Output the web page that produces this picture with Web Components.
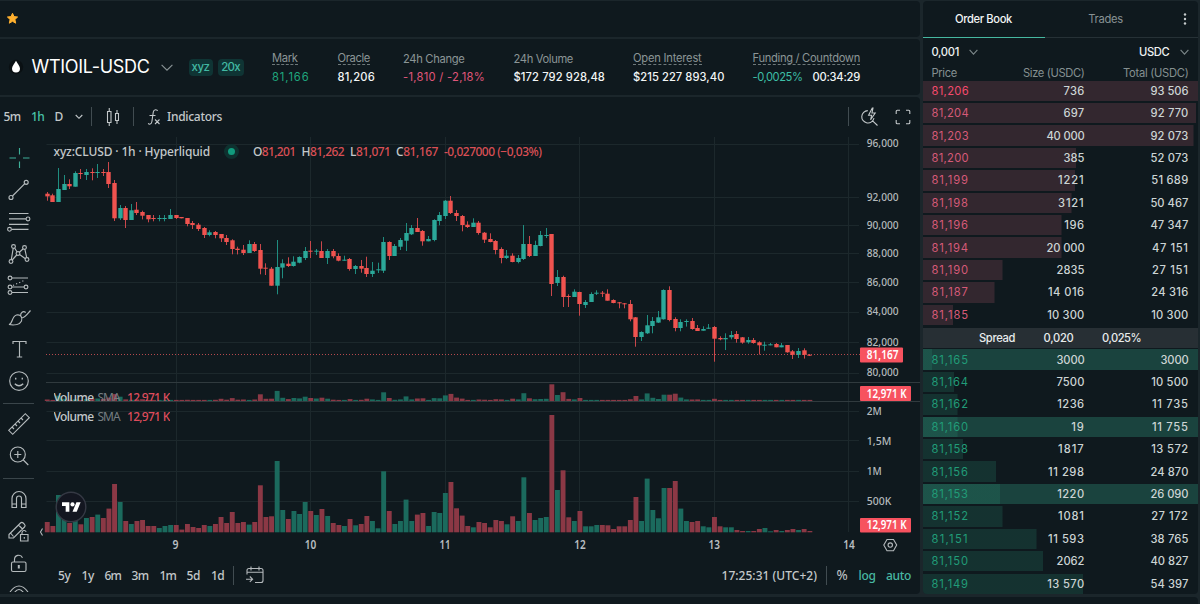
<!DOCTYPE html>
<html lang="en">
<head>
<meta charset="utf-8">
<title>WTIOIL-USDC</title>
<style>
html,body{margin:0;height:100%;overflow:hidden;background:#1b262b}
body{font-family:Inter,"Liberation Sans",sans-serif;font-size:11.2px;color:#d5dbda}
</style>
</head>
<body>
<trade-app></trade-app>
<script>
const define = (name, html, setup) => customElements.define(name, class extends HTMLElement {
  connectedCallback() {
    if (this.shadowRoot) return;
    const t = document.createElement('template');
    t.innerHTML = typeof html === 'function' ? html(this) : html;
    this.attachShadow({mode: 'open'}).appendChild(t.content.cloneNode(true));
    if (setup) setup(this);
  }
});

/* A run of text tracked to occupy exactly `w` pixels. */
define('fit-text', `<style>:host{display:inline-block;white-space:pre;line-height:1.25;flex:none}span{display:inline-block}</style><span><slot></slot></span>`, el => {
  const w = +el.getAttribute('w'), s = el.shadowRoot.querySelector('span');
  const nat = s.getBoundingClientRect().width, n = el.textContent.length;
  el.style.width = w + 'px';
  s.style.letterSpacing = ((w - nat) / Math.max(1, n)).toFixed(3) + 'px';
});

const chevron = (w, h, c) => `<svg class="chev" width="${w}" height="${h}" viewBox="0 0 ${w} ${h}" fill="none" stroke="${c}" stroke-width="1.1"><path d="M.6 .8L${w/2} ${h-.8}L${w-.6} .8"/></svg>`;

define('top-bar', `<style>:host{display:flex;align-items:center;background:#0f191e;border-radius:0 4px 4px 0;padding:0 0 2px 6px;box-sizing:border-box}</style>
<svg width="13" height="13" viewBox="0 0 13 13"><path d="M6.5 1.3L8 4.6l3.6.4-2.7 2.5.8 3.7-3.2-1.9-3.2 1.9.8-3.7L1.4 5 5 4.6z" fill="#ffb02e" stroke="#ffb02e" stroke-linejoin="round"/></svg>`);

define('stat-item', el => `<style>
:host{display:flex;flex-direction:column;align-items:flex-start;flex:none;box-sizing:border-box}
.l{color:#8b9596;height:16px;display:flex;align-items:flex-start;box-sizing:border-box;padding-top:${el.hasAttribute('tip') ? 0 : 1.5}px}
.l.tip{height:14px;border-bottom:1px dashed #6d787a;margin-bottom:2px}
.v{display:flex;gap:10px;font-weight:500;padding-top:2px;margin-top:1px}
</style><div class="l ${el.hasAttribute('tip') ? 'tip' : ''}"><fit-text w="${el.getAttribute('lw')}">${el.getAttribute('label')}</fit-text></div><div class="v"><slot></slot></div>`);

define('market-header', `<style>
:host{display:flex;align-items:center;background:#0f191e;border-radius:0 4px 4px 0;position:relative}
.drop{margin-left:7.500px}
.name{font-size:18px;color:#fff;margin-left:8px;padding-top:1px}
.chev{margin-left:12px;flex:none}
.tag{height:17px;border-radius:4px;background:#0f3434;color:#42b8a2;display:flex;align-items:center;justify-content:center;font-size:11.500px;flex:none;font-weight:500}
.stats{display:grid;grid-template-columns:65.5px 65.5px 110.5px 119.5px 119.5px 110px;margin-left:28.5px;padding-bottom:0}
.g{color:#1fa67d;font-weight:400}.r{color:#e0567a;font-weight:400}.t{color:#3dbfa6;font-weight:400}.w{color:#f2f5f5}
</style>
<svg class="drop" width="16" height="18" viewBox="0 0 16 18"><circle cx="8" cy="9" r="7.2" fill="#0a1013"/><path d="M8 2.8C9.3 5.6 12 8 12 10.6a4 4 0 0 1-8 0C4 8 6.7 5.600 8 2.800z" fill="#fff"/></svg>
<fit-text class="name" w="117.500">WTIOIL-USDC</fit-text>
${chevron(12, 7, '#8a9496')}
<div class="tag" style="width:24px;margin-left:15.500px"><fit-text w="18">xyz</fit-text></div>
<div class="tag" style="width:26px;margin-left:5px"><fit-text w="18.500">20x</fit-text></div>
<div class="stats">
<stat-item tip label="Mark" lw="25.500"><fit-text class="g" w="37.500">81,166</fit-text></stat-item>
<stat-item tip label="Oracle" lw="32.500"><fit-text class="w" w="37.500">81,206</fit-text></stat-item>
<stat-item label="24h Change" lw="61.500"><fit-text class="r" w="82">-1,810 / -2,18%</fit-text></stat-item>
<stat-item label="24h Volume" lw="59.500"><fit-text class="w" w="91.500">$172 792 928,48</fit-text></stat-item>
<stat-item tip label="Open Interest" lw="68.500"><fit-text class="w" w="91.500">$215 227 893,40</fit-text></stat-item>
<stat-item tip label="Funding / Countdown" lw="107.500"><fit-text class="t" w="50">-0,0025%</fit-text><fit-text class="w" w="47.500">00:34:29</fit-text></stat-item>
</div>`);

define('chart-toolbar', `<style>
:host{display:flex;align-items:center;height:37px;padding-top:2px;box-sizing:border-box;font-family:"Noto Sans","Open Sans",sans-serif;font-size:12px;font-weight:500;color:#c3c8ca;padding-left:3.500px}
svg{flex:none;fill:none;stroke:#c3c8ca;stroke-width:1.1}
i{width:1px;height:19px;background:#414c51;flex:none}
.on{color:#48c2a8}
</style>
<fit-text w="17">5m</fit-text><fit-text class="on" w="13" style="margin-left:10.500px">1h</fit-text><fit-text w="8" style="margin-left:10.500px">D</fit-text>
<svg style="margin-left:12px" width="8" height="6" viewBox="0 0 8 6"><path d="M.7 1L4 4.300 7.300 1"/></svg>
<i style="margin-left:8px"></i>
<svg style="margin-left:14px" width="14" height="20" viewBox="0 0 14 20"><path d="M1.500 4.500h3.500v11H1.500zM3.250 1v3.500M3.250 15.500V19M9.500 6.500h3v7h-3zM11 3v3.500M11 13.500V17"/></svg>
<i style="margin-left:13px"></i>
<svg style="margin-left:13.500px" width="14" height="18" viewBox="0 0 14 18"><path d="M10.500 3C10.300 1.500 6.900.8 6.300 4L4.900 13.500C4.500 16.500 2 16.800 1.300 15.300M2.500 7.500h6M8 11.500l4.500 4.500M12.500 11.500L8 16"/></svg>
<fit-text w="55" style="margin-left:6px">Indicators</fit-text>
<i style="margin-left:auto"></i>
<svg style="margin-left:12px" width="18" height="20" viewBox="0 0 18 20"><path d="M6.800 3.600A6.200 6.200 0 1 0 13 11.200M11.600 13.800L16.500 18.500M11.300 1L7.600 8.300h3l-1 4.500 4.600-6.800h-3.200L12 1z"/></svg>
<svg style="margin:0 9px 0 16px" width="16" height="16" viewBox="0 0 16 16"><path d="M1.200 5V2.200q0-1 1-1H5M11 1.200h2.800q1 0 1 1V5M14.800 11v2.800q0 1-1 1H11M5 14.800H2.200q-1 0-1-1V11"/></svg>`);

const tools = {
  cross: '<path stroke="#3fae98" d="M16.500 6v6.500M16.500 19.500V26M6.500 16h6.500M20 16H26.500"/>',
  line: '<circle cx="8" cy="23.500" r="2"/><circle cx="23.200" cy="8.300" r="2"/><path d="M9.500 22L21.800 9.700"/>',
  fib: '<path d="M6 7.500h19.500M6 12.900h17M6 18.300h19.500M9 23.300h16.500"/><circle cx="25" cy="12.900" r="1.900"/><circle cx="6.500" cy="23.300" r="1.900"/>',
  pattern: '<circle cx="10.500" cy="8.500" r="1.900"/><circle cx="21.500" cy="9.500" r="1.900"/><circle cx="8" cy="23.500" r="1.900"/><circle cx="24" cy="21.500" r="1.900"/><circle cx="15" cy="15.500" r="1.900"/><path d="M10.200 10.400L8.300 21.600M11.600 10l2.500 4M16.400 14.200l3.800-3.400M21.900 11.400l1.800 8.200M13.700 17l-4.500 5M16.600 16.500l5.800 4.200"/>',
  forecast: '<circle cx="7" cy="8" r="1.900"/><circle cx="7" cy="17" r="1.900"/><circle cx="23" cy="17" r="1.900"/><circle cx="7" cy="22.500" r="1.900"/><path d="M9 8h16M9 17h12M9 22.500h16"/><path stroke-dasharray="1.200 2.200" d="M10 15.500L22 10"/>',
  brush: '<path d="M6 22.500c4-1 2.500-8 7.500-9.500 4-1 6.500 2.500 5 6-1.500 3.500-7 4.500-12.500 3.500zM17.700 14c-.5-3.500 2.500-5.500 5-3.500M19.300 15.800C23 15 25 11 27.500 8.500"/>',
  text: '<path d="M10 10V7.500h13V10M16.500 7.500V23M13.800 23h5.400"/>',
  smile: '<circle cx="16" cy="15" r="9.300"/><path d="M11.800 17.700q4.200 4 8.400 0M12.700 11.800v1.600M19.300 11.800v1.600" stroke-width="1.400"/>',
  ruler: '<path d="M5.700 22.300L22.300 5.700l4 4L9.700 26.300zM9 19l2 2M12 16l2 2M15 13l2 2M18 10l2 2"/>',
  zoom: '<circle cx="14.800" cy="14.500" r="7.500"/><path d="M20.300 20l5 5M11.300 14.500h7M14.800 11v7"/>',
  magnet: '<path d="M9 23.500v-9a7 7 0 0 1 14 0v9h-4.500v-9a2.500 2.500 0 0 0-5 0v9zM9 20h4.500M18.500 20H23"/>',
  pencil: '<path d="M6 18.500L17.500 7q1.300-1.300 2.700 0l1.300 1.300q1.300 1.400 0 2.700L10.500 22H6zM15.500 9l4 4M7.500 17l3 3.500"/><path d="M17.500 18.500h7.500v6.500h-7.500zM19 18.500v-2a2.200 2.200 0 0 1 4.200-.7M21.300 21v1.700"/>',
  lock: '<rect x="8.500" y="14" width="14.500" height="9.500" rx="1.500"/><path d="M11.500 14v-2.500a4.200 4.200 0 0 1 8-1.800"/><path stroke-width="2" d="M15.800 17v3.500"/>',
  eye: '<path d="M7 12q9-12 18 0M11.500 12.500q4.500-6 9 0"/>'
};
define('tool-rail', () => {
  const ic = n => `<svg width="32" height="32" viewBox="0 0 32 32">${tools[n]}</svg>`;
  return `<style>:host{display:flex;flex-direction:column;align-items:flex-start;width:39px;padding:8px 0 0 3px;box-sizing:border-box;overflow:hidden}
svg{flex:none;fill:none;stroke:#b4babc;stroke-width:1.150}
i{height:1px;width:31px;background:#3a454a;flex:none}</style>
${['cross','line','fib','pattern','forecast','brush','text','smile'].map(ic).join('')}<i style="margin:5px 0 4px"></i>${ic('ruler')}${ic('zoom')}<i style="margin:6px 0 5px"></i>${['magnet','pencil','lock','eye'].map(ic).join('')}`;
});

/* Candles: direction, then high / body top / body bottom / low in thirds of a pixel below `base`. */
const series = [
  [150, 'R126,131,139,152 R131,136,156,156 G54,117,156,156 G75,102,120,120 R88,102,109,117 G64,69,110,110 R57,69,72,87 G57,66,75,90 R55,66,68,91 G42,66,69,84 R57,66,69,78 R36,66,102,114 R90,99,205,213 G165,174,205,210 R168,174,210,234 G162,181,210,210 R156,179,189,195 R182,186,197,208 R195,195,208,217 R195,204,207,214 G195,204,207,214 G195,204,207,214 G177,195,207,207 R195,195,204,207 R201,201,205,205 R204,204,222,229 R213,219,225,237 R219,224,237,243 R231,234,255,264 G241,247,255,259 R243,246,255,265 R252,252,265,276 R255,264,276,285 R268,271,297,313 R290,296,300,313 R285,299,309,315 G271,282,309,309 R276,282,303,306 R282,300,356,373 R340,353,356,375 R351,356,407,407 G270,351,407,433 G328,340,353,385 R322,341,348,351 G319,335,348,350'],
  [180, 'G229,231,248,250 G201,213,234,240 R183,212,215,234 G207,212,215,225 R184,213,234,234 G207,213,234,252 R207,213,229,235 R220,228,242,244 G227,239,242,242 R234,237,267,272 G255,258,267,282 R240,258,266,278 R230,264,282,291 G246,272,282,291 G248,268,271,279 G171,186,272,279 R184,186,228,240 G192,198,228,228 G174,180,200,210 G129,159,182,213 G135,144,163,165 R114,144,156,156 R150,153,184,197 G168,177,184,184 G118,120,180,184 G96,105,123,136 G60,62,108,117 R48,62,99,102 R90,99,108,123 R105,108,135,154 R124,134,141,144 G115,128,141,141 R123,128,159,164 R156,158,179,189 R160,177,186,187 R180,183,210,223 R202,207,234,250 G210,227,234,237 R220,227,246,247 G225,234,246,250 G135,192,237,240 R168,192,228,231 G182,195,228,228 G153,165,198,199 G144,165,168,174 R162,162,312,348'],
  [220, 'G150,171,189,198 R167,171,231,261 R223,228,231,261 G208,215,231,231 R215,216,252,287 G240,246,255,264 G217,222,246,246 G211,218,221,225 R213,218,221,231 R208,221,242,242 R238,240,249,250 R246,247,250,265 R249,250,252,265 R240,252,298,304 R291,292,351,380 G334,336,351,363 G285,316,340,342 G291,303,318,340 G273,292,308,309 G208,210,298,299 R199,210,300,304 R292,297,324,334 G298,306,324,334 G298,303,306,320 R294,303,327,329 R315,324,333,333 G319,327,332,332 G312,323,326,327 R318,321,356,425 R349,354,358,361 G340,354,358,390 G333,345,352,358 R333,342,357,368 R351,352,368,371 G351,360,367,371 R354,360,369,371 R364,367,376,404 G365,374,377,392 G369,373,376,376 R369,372,382,382 G369,376,382,382 R375,375,397,398 R390,394,405,417 G384,393,405,414 R385,391,405,416 R402,404,407,408']
];
const volumes = [31,19,112,47,28,37,24,43,46,53,43,71,145,91,34,25,34,37,19,19,13,19,22,22,8,25,16,13,22,19,25,46,28,61,28,31,23,31,141,46,48,214,67,40,64,55,91,64,52,70,49,28,22,19,40,21,25,49,34,12,183,64,25,34,98,34,53,58,19,61,58,118,151,72,50,19,15,31,28,15,37,34,24,48,34,165,58,37,43,46,352,127,186,45,34,64,18,18,22,22,21,10,18,18,37,106,34,161,67,42,133,133,154,71,34,31,34,18,15,46,18,15,15,7,4,4,4,10,13,3,7,4,7,10,7,10,4];

define('price-chart', () => {
  const X = i => 47.2 + 5.607 * i;
  let grid = '', bars = '', vol = '', mini = '', i = 0;
  const gy = [144.5,197.5,225.5,253.5,282.5,312.5,342.5,373.5,411.5,440.5,471.5,501.5];
  for (const y of gy) grid += `<path d="M46.500 ${y}H859"/>`;
  for (const x of [176.5,310.5,445.5,579.5,714.5,848.5]) grid += `<path d="M${x} 137V532"/>`;
  for (const [base, list] of series) for (const c of list.split(' ')) {
    const up = c[0] === 'G', [h, t, b, l] = c.slice(1).split(',').map(v => base + v / 3), x = X(i);
    const wx = Math.floor(x);
    bars += `<rect x="${wx}" y="${h.toFixed(1)}" width="1" height="${(l-h).toFixed(1)}" fill="${up ? '#1f8d80' : '#c9474b'}"/><rect x="${wx-1.7}" y="${t.toFixed(1)}" width="4.400" height="${Math.max(1, b-t).toFixed(1)}" fill="${up ? '#2ba899' : '#f0534f'}"/>`;
    const v = volumes[i] / 3, f = up ? '#1b6a5d' : '#8b3845';
    vol += `<rect x="${(x-2.4).toFixed(1)}" y="${(532.3-v).toFixed(1)}" width="4.900" height="${v.toFixed(1)}" fill="${f}"/>`;
    const m = Math.max(1.1, v * .142);
    mini += `<rect x="${(x-2.4).toFixed(1)}" y="${(401-m).toFixed(1)}" width="4.900" height="${m.toFixed(1)}" fill="${f}"/>`;
    i++;
  }
  const lab = (t, x, y, w, c = '#b4b9bc', wt = 500) => `<text x="${x}" y="${y}" textLength="${w}" lengthAdjust="spacingAndGlyphs" fill="${c}" font-weight="${wt}">${t}</text>`;
  const prices = [['96,000',143],['92,000',197],['90,000',224.5],['88,000',252.5],['86,000',282],['84,000',311],['82,000',341.5],['80,000',372]].map(([t,y]) => lab(t, 866.8, y+4.2, 31.7)).join('');
  const vols = [['2M',411,15],['1,5M',440.5,24.5],['1M',471,15],['500K',501,24.5]].map(([t,y,w]) => lab(t, 866.8, y+4.2, w)).join('');
  const days = [['9',175.5,6],['10',310.5,11.5],['11',445,11],['12',580,11.5],['13',714.2,11.5],['14',849,11.5]].map(([t,x,w]) => lab(t, x-w/2, 549, w, '#b9bec1', 600)).join('');
  const tag = (y, h, w, t, tw) => `<rect x="860" y="${y}" width="${w}" height="${h}" rx="1" fill="#f7525f"/>` + lab(t, 866.8, y+h/2+4.2, tw, '#fff', 600);
  return `<style>
:host{display:block;position:relative;font-family:"Noto Sans","Open Sans",sans-serif;font-size:12px;font-weight:500;color:#c3c8ca;min-height:0}
.plot{display:block;font-size:11.600px}
.leg{position:absolute;left:14.500px;top:9.500px;display:flex;align-items:center;height:16px}
.leg b{font-weight:500}
.leg em{font-style:normal;color:#d94f55}
.dot{width:7px;height:7px;border:4px solid #0e312f;border-radius:50%;background:#119b7d;margin:0 14px 0 14px}
.v{position:absolute;left:14.500px;height:16px;display:flex;align-items:center;overflow:hidden}
.v .s{color:#757d81;margin:0 7.500px 0 4px;font-weight:400}.v .n{color:#dd4c5c}
</style>
<svg class="plot" width="881" height="423" viewBox="39 134 881 423">
<g stroke="#1c282c" fill="none">${grid}</g>
<path stroke="#303a3e" d="M46 382.500H920M46 401.500H920"/>
${mini}${vol}${bars}
<path d="M46 354.500H860" stroke="#b5494d" stroke-dasharray="1 2"/>
${prices}${vols}${days}
${tag(347.4,15,43,'81,167',31.7)}${tag(386,15,51,'12,971 K',39.7)}${tag(518,14.4,51,'12,971 K',39.7)}
<g fill="none" stroke="#b4b9bc" stroke-width="1.100"><path d="M887 539.500h6.500l3.200 5.600-3.200 5.600H887l-3.200-5.600z"/><circle cx="890.250" cy="545.100" r="2.200"/><path d="M42.500 528.500l-2 3.500 2 3.500"/></g>
<circle cx="71" cy="507" r="14.800" fill="#131620" stroke="#353944" stroke-width="1.400"/>
<g transform="translate(62 500.200) scale(.525)" fill="#fff"><path d="M14 22H7V11H0V4h14v18zM28 22h-8l7.500-18h8L28 22z"/><circle cx="20" cy="8" r="4"/></g>
</svg>
<div class="leg"><fit-text w="156.500">xyz:CLUSD · 1h · Hyperliquid</fit-text><span class="dot"></span>
<fit-text w="42.500">O<em>81,201</em></fit-text><fit-text w="42.500" style="margin-left:6px">H<em>81,262</em></fit-text><fit-text w="40.500" style="margin-left:6px">L<em>81,071</em></fit-text><fit-text w="42" style="margin-left:5.500px">C<em>81,167</em></fit-text><fit-text w="97.500" style="margin-left:6px"><em>-0,027000 (−0,03%)</em></fit-text></div>
<div class="v" style="top:256px;height:11px;align-items:flex-start"><fit-text w="40">Volume</fit-text><fit-text class="s" w="22">SMA</fit-text><fit-text class="n" w="42.500">12,971 K</fit-text></div>
<div class="v" style="top:274px"><fit-text w="40">Volume</fit-text><fit-text class="s" w="22">SMA</fit-text><fit-text class="n" w="42.500">12,971 K</fit-text></div>`;
});

define('range-bar', () => {
  const items = [['5y',12.5,0],['1y',12.5,11],['6m',16.5,10.5],['3m',17,10.5],['1m',16.5,11],['5d',13.5,10.5],['1d',13,11]];
  return `<style>
:host{display:flex;align-items:center;font-family:"Noto Sans","Open Sans",sans-serif;font-size:12px;font-weight:500;color:#c3c8ca;padding:0 9px 1px 19px;box-sizing:border-box;height:37px}
i{width:1px;height:19px;background:#414c51;flex:none}
svg{flex:none;fill:none;stroke:#b4b9bc;stroke-width:1.100}.t{color:#48b8a2}
</style>${items.map(([t,w,m]) => `<fit-text w="${w}" style="margin-left:${m}px">${t}</fit-text>`).join('')}
<i style="margin-left:9px"></i>
<svg style="margin-left:11px" width="20" height="18" viewBox="0 0 20 18"><path d="M2 8.500V4.500q0-2 2-2h12q2 0 2 2V14.500q0 2-2 2h-6M2 6.300h16M6 .5v4M14 .5v4M1 13.200h6.500M4.800 10.500l2.800 2.700-2.800 2.700"/></svg>
<fit-text w="95.500" style="margin-left:auto">17:25:31 (UTC+2)</fit-text><i style="margin-left:9px"></i>
<fit-text w="11.500" style="margin-left:9.500px;font-weight:400;font-size:13.500px">%</fit-text><fit-text class="t" w="17" style="margin-left:10.500px">log</fit-text><fit-text class="t" w="25" style="margin-left:10.500px">auto</fit-text>`;
});

define('chart-panel', `<style>
:host{display:grid;grid-template-rows:37px 1fr;background:#0f191e;border-radius:0 4px 4px 0;overflow:hidden}
.body{display:grid;grid-template-columns:39px 1fr;min-height:0;overflow:hidden;margin-bottom:2px}
.main{display:flex;flex-direction:column;min-width:0}
</style><chart-toolbar></chart-toolbar><div class="body"><tool-rail></tool-rail><div class="main"><price-chart></price-chart><range-bar></range-bar></div></div>`);

define('book-row', el => {
  const a = n => el.getAttribute(n), w = t => [...t].reduce((s, c) => s + (c === ' ' || c === ',' ? 3.1 : c === '1' ? 6.2 : 7), 0);
  return `<style>
:host{display:grid;grid-template-columns:162px 1fr;height:20.400px;margin-bottom:2.030px;align-items:center;box-sizing:border-box;color:#ccd4d4;font-weight:500;
background:linear-gradient(var(--bar),var(--bar)) 0 0/${a('bar')}px 100% no-repeat ${a('flash') !== null ? ',#1a433e' : ''}}
.a{display:grid;grid-template-columns:1fr auto;padding-left:9px}.p{font-weight:400;color:${a('bright') !== null ? '#f64a6d' : 'var(--price)'}}
.t{text-align:right;padding-right:9px}
</style><div class="a"><fit-text class="p" w="37.400">${a('price')}</fit-text><fit-text w="${w(a('size')).toFixed(1)}">${a('size')}</fit-text></div><div class="t"><fit-text w="${w(a('total')).toFixed(1)}">${a('total')}</fit-text></div>`;
});

define('order-book', () => {
  const asks = [['81,206','736','93 506',275],['81,204','697','92 770',273],['81,203','40 000','92 073',270.5],['81,200','385','52 073',153],['81,199','1221','51 689',152],['81,198','3121','50 467',148.5],['81,196','196','47 347',138.5],['81,194','20 000','47 151',138.5],['81,190','2835','27 151',79.5],['81,187','14 016','24 316',71.5],['81,185','10 300','10 300',30]];
  const bids = [['81,165','3000','3000',9,1],['81,164','7500','10 500',31],['81,162','1236','11 735',34.5],['81,160','19','11 755',34.5,1],['81,158','1817','13 572',40],['81,156','11 298','24 870',73],['81,153','1220','26 090',77,1],['81,152','1081','27 172',79.5],['81,151','11 593','38 765',113.5],['81,150','2062','40 827',120],['81,149','13 570','54 397',160]];
  const row = (r, i, s) => `<book-row price="${r[0]}" size="${r[1]}" total="${r[2]}" bar="${r[3]}"${r[4] ? ' flash' : ''}${s && !i ? ' bright' : ''}></book-row>`;
  return `<style>
:host{display:flex;flex-direction:column;background:#0f191e;border-radius:4px;overflow:hidden;font-size:11.200px}
.tabs{display:grid;grid-template-columns:122px 122px 1fr;height:37px;flex:none;box-sizing:border-box;border-bottom:1px solid #263136;text-align:center;align-items:stretch}
.tabs div{display:flex;align-items:center;justify-content:center;color:#879193}
.tabs .on{color:#f2f5f5;font-weight:500;border-bottom:1px solid #46b7a0;margin-bottom:-1px}
.sel{display:flex;align-items:center;height:27px;padding:0 9px;color:#eef2f2;font-weight:500;flex:none}
.chev{margin-left:10px}
.head{display:grid;grid-template-columns:162px 1fr;height:15px;align-items:center;color:#859091;flex:none}
.head div{display:flex;justify-content:space-between;padding-left:9px}
.head div+div{justify-content:flex-end;padding-right:9px}
.asks{--bar:#33272f;--price:#d65a78;flex:none;padding-top:.6px}
.bids{--bar:rgba(42,150,120,.2);--price:#219c78;flex:none}
.spread{display:flex;height:20.200px;margin:.6px 0 1.600px;background:#272f34;align-items:center;color:#e8ecec;font-weight:500;padding-left:56.500px;flex:none}
</style>
<div class="tabs"><div class="on"><fit-text w="57">Order Book</fit-text></div><div><fit-text w="34.500">Trades</fit-text></div><div><svg width="4" height="14" viewBox="0 0 4 14" fill="#c6cccd" style="margin-left:5px"><circle cx="2" cy="2.500" r="1.200"/><circle cx="2" cy="7" r="1.200"/><circle cx="2" cy="11.500" r="1.200"/></svg></div></div>
<div class="sel"><fit-text w="27.500">0,001</fit-text>${chevron(9, 6, '#7b8688')}<fit-text w="30.500" style="margin-left:auto">USDC</fit-text>${chevron(9, 6, '#7b8688')}</div>
<div class="head"><div><fit-text w="25.500">Price</fit-text><fit-text w="61.500">Size (USDC)</fit-text></div><div><fit-text w="65.500">Total (USDC)</fit-text></div></div>
<div class="asks">${asks.map((r, i) => row(r, i, 1)).join('')}</div>
<div class="spread"><fit-text w="36">Spread</fit-text><fit-text w="30" style="margin-left:28.500px">0,020</fit-text><fit-text w="39" style="margin-left:28.500px">0,025%</fit-text></div>
<div class="bids">${bids.map((r, i) => row(r, i, 0)).join('')}</div>`;
});

define('trade-app', `<style>
:host{display:grid;grid-template-columns:920px 275px;column-gap:2.500px;grid-template-rows:593px 1fr;row-gap:3px;height:604px;padding-top:1px;box-sizing:border-box}
.left{display:grid;grid-template-rows:36px 56px 1fr;row-gap:2px;min-height:0}
.foot{grid-column:1/3;width:1198px;background:#0f191e;border-radius:0 4px 0 0}
</style>
<div class="left"><top-bar></top-bar><market-header></market-header><chart-panel></chart-panel></div>
<order-book></order-book>
<div class="foot"></div>`);
</script>
</body>
</html>
